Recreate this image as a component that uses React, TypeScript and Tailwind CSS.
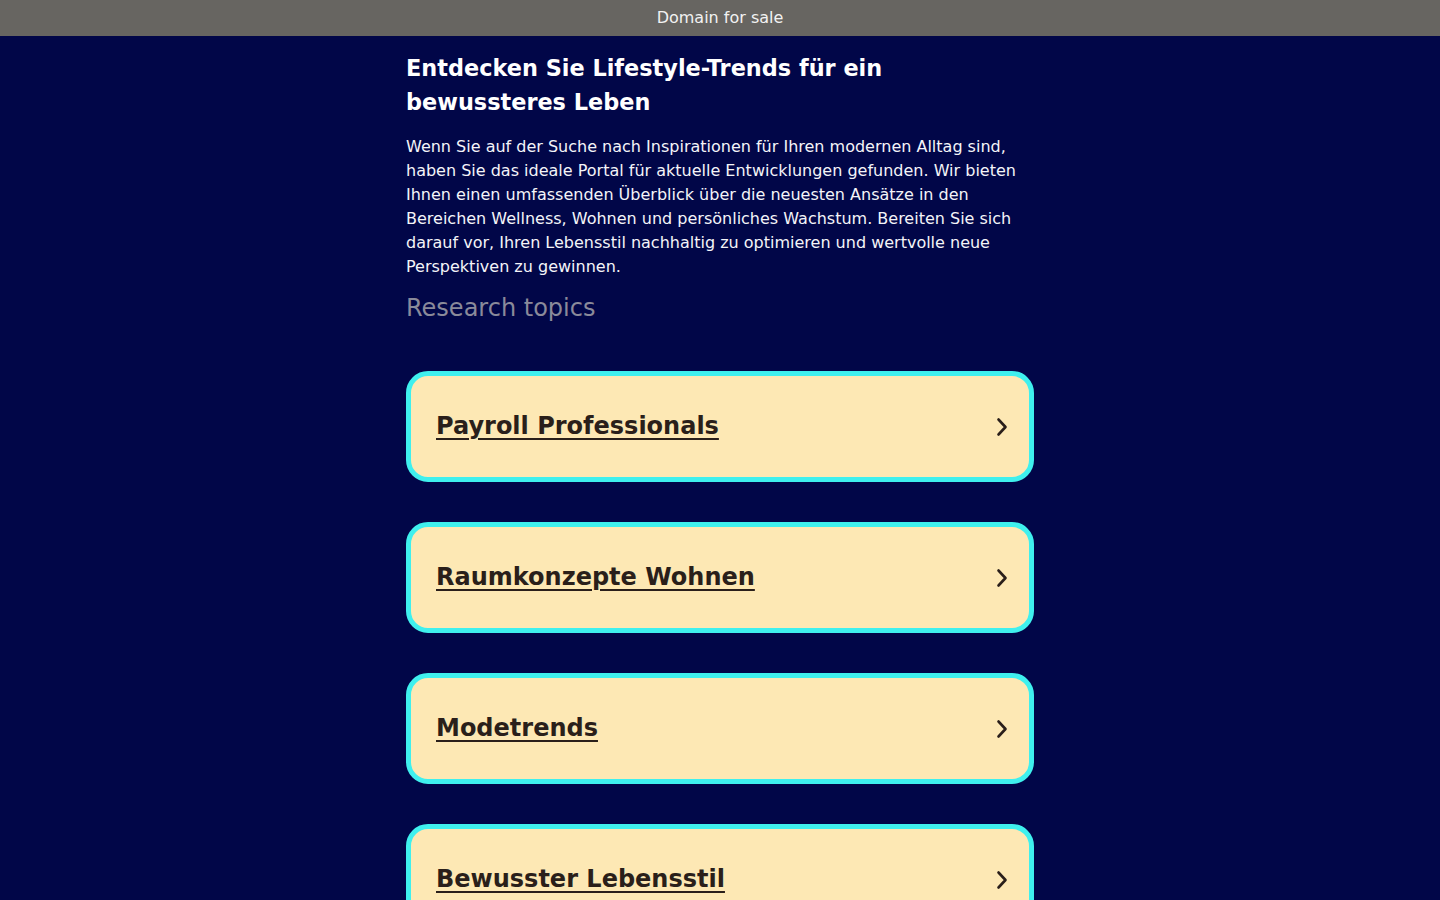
const topics = [
  "Payroll Professionals",
  "Raumkonzepte Wohnen",
  "Modetrends",
  "Bewusster Lebensstil",
];

function Chevron() {
  return (
    <svg className="mt-[2px] h-[24px] w-[16px]" viewBox="0 0 16 24" fill="none">
      <path
        d="M4.5 4.5L11.5 12L4.5 19.5"
        stroke="#2a1f1a"
        strokeWidth={2.6}
        strokeLinecap="round"
        strokeLinejoin="round"
      />
    </svg>
  );
}

export default function App() {
  return (
    <div
      className="min-h-screen bg-[#010648] text-white"
      style={{ fontFamily: '"DejaVu Sans", Verdana, sans-serif' }}
    >
      {/* Top bar */}
      <div className="flex h-9 items-center justify-center bg-[#676561] text-[16px] text-[#f2f2f2]">
        Domain for sale
      </div>

      <main className="mx-auto w-[628px] pt-[15px]">
        <h1 className="text-[22.4px] font-bold leading-[34px]">
          Entdecken Sie Lifestyle-Trends für ein bewussteres Leben
        </h1>
        <p className="mt-[16px] text-[16px] leading-[24px] text-[#f4f4f8]">
          Wenn Sie auf der Suche nach Inspirationen für Ihren modernen Alltag
          sind, haben Sie das ideale Portal für aktuelle Entwicklungen gefunden.
          Wir bieten Ihnen einen umfassenden Überblick über die neuesten Ansätze
          in den Bereichen Wellness, Wohnen und persönliches Wachstum. Bereiten
          Sie sich darauf vor, Ihren Lebensstil nachhaltig zu optimieren und
          wertvolle neue Perspektiven zu gewinnen.
        </p>
        <h2 className="mt-[13px] text-[24px] leading-[32px] text-[#8a8a9a]">
          Research topics
        </h2>

        <div className="mt-[47px] flex flex-col gap-[40px] pb-10">
          {topics.map((t) => (
            <a
              key={t}
              href="#"
              className="flex h-[111px] items-center justify-between rounded-[22px] border-[5px] border-[#3ff0ee] bg-[#fde8b4] pb-[2px] pl-[25px] pr-[19px]"
            >
              <span className="text-[24px] font-bold text-[#2a1f1a] underline decoration-2 underline-offset-[4px]">
                {t}
              </span>
              <Chevron />
            </a>
          ))}
        </div>
      </main>
    </div>
  );
}
